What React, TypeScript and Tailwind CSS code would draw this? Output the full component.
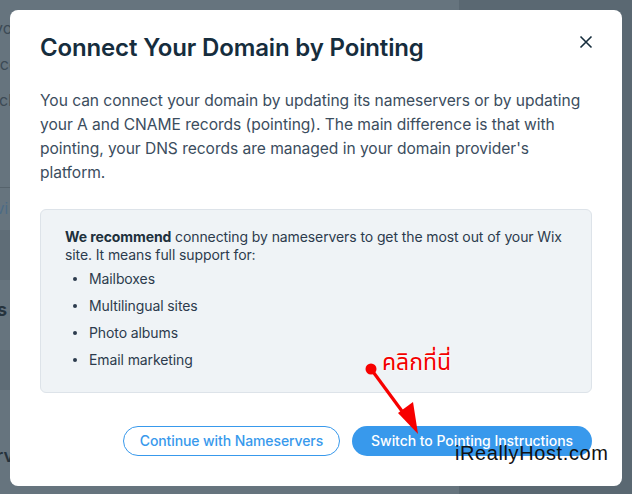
import React from "react";

// Features listed inside the recommendation box
const features = ["Mailboxes", "Multilingual sites", "Photo albums", "Email marketing"];

function CloseIcon() {
  return (
    <svg width="14" height="14" viewBox="0 0 14 14" className="block">
      <path d="M1.5 1.5 L12.5 12.5 M12.5 1.5 L1.5 12.5" stroke="#162d3d" strokeWidth="1.6" fill="none" />
    </svg>
  );
}

// Red annotation arrow drawn over the dialog
function Annotation() {
  return (
    <div className="absolute left-[360px] top-[350px] pointer-events-none">
      <svg width="70" height="90" viewBox="0 0 70 90" className="absolute left-0 top-0">
        <circle cx="11" cy="19" r="5.5" fill="#f70000" />
        <path d="M11 19 L50 72" stroke="#f70000" strokeWidth="3.2" fill="none" />
        <path d="M38 63 L53 52 L58 84 Z" fill="#f70000" />
      </svg>
      <div className="absolute left-[22px] top-[-2px] whitespace-nowrap text-[23px] leading-[30px] text-[#f20000] [font-family:'Noto_Sans_Thai','Loma','Garuda','DejaVu_Sans',sans-serif] [text-shadow:0_0_2px_#fff,0_0_2px_#fff,0_0_1px_#fff]">
        คลิกที่นี่
      </div>
    </div>
  );
}

export default function App() {
  return (
    <div className="relative w-[632px] h-[494px] overflow-hidden bg-[#5d6b75] [font-family:Inter,'Open_Sans',sans-serif]">
      {/* page behind the overlay */}
      <div className="flex h-full">
        <div className="w-[459px] h-full bg-[#66747e] flex flex-col text-[#3c4a55] text-[16px]">
          <div className="h-[188px] border-b border-[#56636c] flex flex-col pt-[16px] gap-[12px] -ml-[6px] leading-[24px]">
            <span>you</span>
            <span>rco</span>
            <span>tch</span>
          </div>
          <div className="h-[42px] pt-[10px] -ml-[4px] text-[#4c6b86] text-[15px]">vi</div>
          <div className="h-[50px] bg-[#5f6d77]" />
          <div className="h-[70px] pt-[16px] -ml-[3px] font-bold text-[18px] text-[#26333d]">s</div>
          <div className="h-[40px] bg-[#5f6d77]" />
          <div className="flex-1 pt-[52px] -ml-[4px] font-semibold text-[18px] text-[#26333d]">rv</div>
        </div>
        <div className="flex-1 h-full bg-[#5a6872]" />
      </div>

      {/* dialog */}
      <div className="absolute left-[10px] top-[10px] w-[612px] h-[476px] bg-white rounded-[8px] px-[30px] pt-[22px] pb-[30px] flex flex-col">
        <div className="flex items-start justify-between">
          <h1 className="text-[24px] leading-[32px] font-semibold text-[#162d3d] tracking-[-0.15px]">
            Connect Your Domain by Pointing
          </h1>
          <button className="mt-[-2px] mr-[-6px] w-[24px] h-[24px] flex items-center justify-center">
            <CloseIcon />
          </button>
        </div>

        <p className="mt-[25px] max-w-[550px] text-[15.6px] leading-[24px] text-[#3b4d5e] tracking-[-0.05px]">
          You can connect your domain by updating its nameservers or by updating your A and CNAME records (pointing). The main difference is that with pointing, your DNS records are managed in your domain provider's platform.
        </p>

        <div className="mt-[24px] h-[184px] bg-[#eff3f6] border border-[#dde3e9] rounded-[6px] pl-[24px] pr-[20px] pt-[18px] text-[14px] leading-[18px] text-[#2c3b4d] tracking-[-0.1px]">
          <p>
            <span className="font-bold text-[#20303c]">We recommend</span> connecting by nameservers to get the most out of your Wix site. It means full support for:
          </p>
          <ul className="mt-[6px] flex flex-col gap-[9px]">
            {features.map((f) => (
              <li key={f} className="flex items-center">
                <span className="w-[4px] h-[4px] rounded-full bg-[#2c3b4d] ml-[8px] mr-[12px]" />
                <span>{f}</span>
              </li>
            ))}
          </ul>
        </div>

        <div className="mt-auto flex justify-end gap-[12px]">
          <button className="h-[30px] px-[16px] rounded-full border border-[#3899ec] text-[#3899ec] text-[14px] font-medium leading-[28px] tracking-[-0.1px]">
            Continue with Nameservers
          </button>
          <button className="h-[30px] px-[19px] rounded-full bg-[#3899ec] text-white text-[14px] font-medium leading-[30px] tracking-[-0.05px]">
            Switch to Pointing Instructions
          </button>
        </div>
      </div>

      <Annotation />

      {/* watermark */}
      <div className="absolute left-[455px] top-[441px] text-[20px] leading-[24px] tracking-[0.6px] text-[#111] [font-family:'Liberation_Sans',Arial,sans-serif]">
        iReallyHost.com
      </div>
    </div>
  );
}
